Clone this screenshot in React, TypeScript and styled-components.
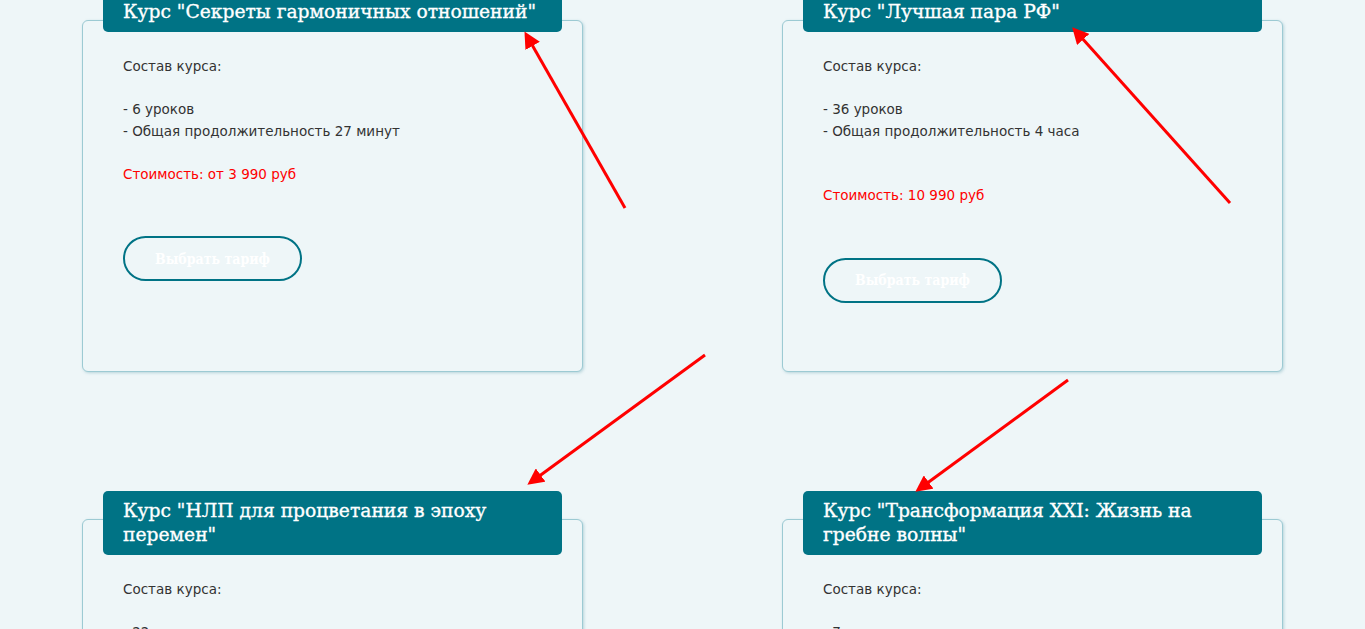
import React from 'react';
import styled, { createGlobalStyle } from 'styled-components';

const GlobalStyle = createGlobalStyle`
  html, body {
    margin: 0;
    padding: 0;
    background: #eef6f8;
  }
  body {
    font-family: 'DejaVu Sans', 'Open Sans', sans-serif;
  }
`;

interface Course {
  id: number;
  title: string;
  lines: string[];
  gap: number;
  price: string;
}

const courses: Course[] = [
  {
    id: 1,
    title: 'Курс "Секреты гармоничных отношений"',
    lines: ['- 6 уроков', '- Общая продолжительность 27 минут'],
    gap: 1,
    price: 'Стоимость: от 3 990 руб',
  },
  {
    id: 2,
    title: 'Курс "Лучшая пара РФ"',
    lines: ['- 36 уроков', '- Общая продолжительность 4 часа'],
    gap: 2,
    price: 'Стоимость: 10 990 руб',
  },
  {
    id: 3,
    title: 'Курс "НЛП для процветания в эпоху перемен"',
    lines: ['- 22 урока', '- Общая продолжительность 3 часа'],
    gap: 1,
    price: 'Стоимость: от 5 990 руб',
  },
  {
    id: 4,
    title: 'Курс "Трансформация XXI: Жизнь на гребне волны"',
    lines: ['- 7 уроков', '- Общая продолжительность 2 часа'],
    gap: 1,
    price: 'Стоимость: от 4 990 руб',
  },
];

// red annotation arrows drawn over the cards
const arrows = [
  { x1: 625, y1: 208, x2: 531, y2: 43 },
  { x1: 1230, y1: 203, x2: 1081, y2: 37 },
  { x1: 705, y1: 355, x2: 538, y2: 477 },
  { x1: 1068, y1: 380, x2: 926, y2: 484 },
];

const Page = styled.div`
  position: relative;
  min-height: 1100px;
  overflow: hidden;
`;

const Grid = styled.section`
  display: grid;
  grid-template-columns: 501px 501px;
  justify-content: center;
  column-gap: 199px;
  row-gap: 147px;
  padding-top: 20px;
`;

const Card = styled.article`
  border: 1px solid #9ccad3;
  border-radius: 6px;
  box-shadow: 1px 1px 3px rgba(80, 150, 165, 0.35);
  background: #eef6f8;
  padding: 0 40px 68px;
  display: flex;
  flex-direction: column;
  align-items: flex-start;
`;

const TitleBar = styled.h2`
  box-sizing: border-box;
  align-self: stretch;
  margin: -29px -20px 0;
  padding: 8px 20px;
  background: #007385;
  border-radius: 5px;
  color: #fff;
  font-family: 'DejaVu Serif', 'Liberation Serif', serif;
  font-weight: 400;
  font-size: 18.7px;
  line-height: 24px;
  -webkit-text-stroke: 0.35px #fff;
`;

const Text = styled.p`
  margin: 24px 0 0;
  font-size: 13.5px;
  line-height: 21.5px;
  color: #333;
`;

const Price = styled.span`
  color: #ff0000;
`;

const Spacer = styled.span<{ $lines: number }>`
  display: block;
  height: ${(p) => p.$lines * 21.5}px;
`;

const PickButton = styled.button`
  margin-top: 51px;
  width: 179px;
  height: 45px;
  border: 2px solid #007385;
  border-radius: 23px;
  background: transparent;
  color: #ffffff;
  font-family: 'DejaVu Serif Condensed', 'DejaVu Serif', serif;
  font-weight: 700;
  font-size: 14px;
  cursor: pointer;
`;

const Overlay = styled.svg`
  position: absolute;
  left: 0;
  top: 0;
  width: 1365px;
  height: 629px;
  pointer-events: none;
`;

export default function App() {
  return (
    <Page>
      <GlobalStyle />
      <Grid>
        {courses.map((c) => (
          <Card key={c.id}>
            <TitleBar>{c.title}</TitleBar>
            <Text>
              Состав курса:
              <Spacer $lines={1} />
              {c.lines.map((l) => (
                <React.Fragment key={l}>
                  {l}
                  <br />
                </React.Fragment>
              ))}
              <Spacer $lines={c.gap} />
              <Price>{c.price}</Price>
            </Text>
            <PickButton>Выбрать тариф</PickButton>
          </Card>
        ))}
      </Grid>
      <Overlay viewBox="0 0 1365 629">
        <defs>
          <marker
            id="head"
            viewBox="0 0 10 10"
            refX="2"
            refY="5"
            markerWidth="5.5"
            markerHeight="5.5"
            orient="auto">
            <path d="M0 0 L10 5 L0 10 z" fill="#ff0000" />
          </marker>
        </defs>
        {arrows.map((a, i) => (
          <line
            key={i}
            x1={a.x1}
            y1={a.y1}
            x2={a.x2}
            y2={a.y2}
            stroke="#ff0000"
            strokeWidth={3}
            markerEnd="url(#head)"
          />
        ))}
      </Overlay>
    </Page>
  );
}
